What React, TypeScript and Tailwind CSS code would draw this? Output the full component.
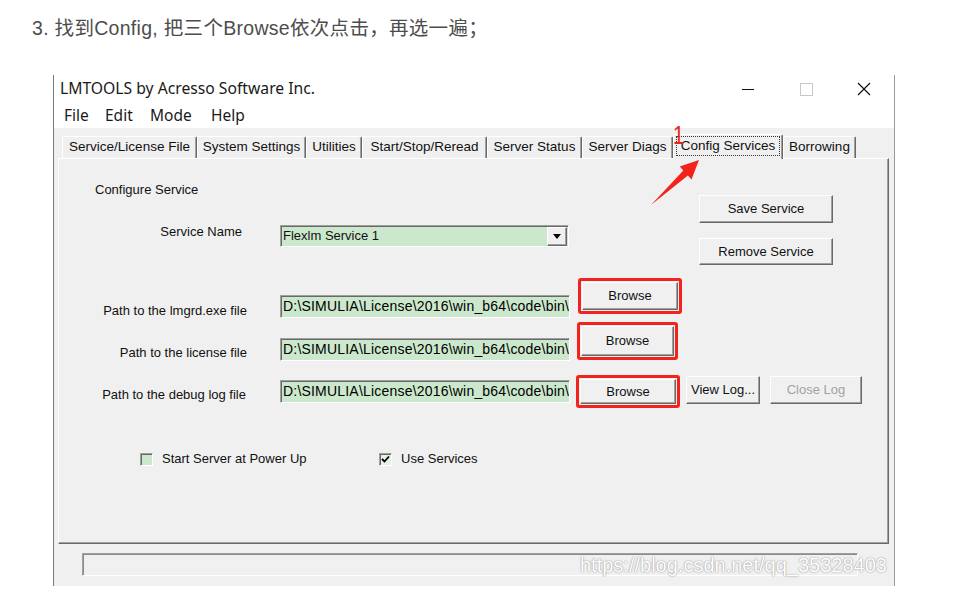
import React from "react";

const tabs = [
  { label: "Service/License File", w: "w-[135px]" },
  { label: "System Settings", w: "w-[109px]" },
  { label: "Utilities", w: "w-[56px]" },
  { label: "Start/Stop/Reread", w: "w-[125px]" },
  { label: "Server Status", w: "w-[95px]" },
  { label: "Server Diags", w: "w-[91px]" },
  { label: "Config Services", w: "w-[110px]", active: true },
  { label: "Borrowing", w: "w-[73px]" },
];

const btn =
  "flex items-center justify-center bg-[#f0f0f0] text-[13px] border border-t-white border-l-white border-r-[#696969] border-b-[#696969] shadow-[inset_-1px_-1px_0_#a0a0a0]";
const field =
  "bg-[#cce8cc] border border-t-[#a0a0a0] border-l-[#a0a0a0] border-r-white border-b-white shadow-[inset_1px_1px_0_#696969]";
const redBox = "border-[3px] border-[#f3231c] rounded-[3px] p-px";

const path = "D:\\SIMULIA\\License\\2016\\win_b64\\code\\bin\\";

function PathField({ mt }: { mt: string }) {
  return (
    <div className={`${field} ${mt} w-[290px] h-[23px] flex items-center overflow-hidden whitespace-nowrap pl-[2px] text-[14px] tracking-[0.2px] text-black`}>
      {path}
    </div>
  );
}

export default function App() {
  return (
    <div className="relative w-[975px] h-[605px] overflow-hidden bg-white font-['Liberation_Sans','Noto_Sans_CJK_SC',sans-serif]">
      <p className="pl-[32px] pt-[15px] text-[19.5px] tracking-[0.3px] leading-[26px] text-[#4d4d4d]">
        3. 找到Config, 把三个Browse依次点击，再选一遍；
      </p>

      {/* LMTOOLS window */}
      <div className="ml-[53px] mt-[34px] w-[842px] border-l border-r border-l-[#7a7a7a] border-r-[#9a9a9a] flex flex-col">
        <div className="h-[28px] flex items-center pl-[6px] font-['Noto_Sans',sans-serif] text-[15.7px] text-[#1a1a1a]">
          <span>LMTOOLS by Acresso Software Inc.</span>
          <div className="ml-auto flex items-center pr-[23px]">
            <svg width="12" height="12" viewBox="0 0 12 12">
              <line x1="0" y1="6.5" x2="12" y2="6.5" stroke="#111" strokeWidth="1" />
            </svg>
            <svg width="13" height="13" viewBox="0 0 13 13" className="ml-[46px]">
              <rect x="0.5" y="0.5" width="12" height="12" fill="none" stroke="#c8c8c8" strokeWidth="1" />
            </svg>
            <svg width="14" height="14" viewBox="0 0 14 14" className="ml-[44px]">
              <path d="M1 1 L13 13 M13 1 L1 13" stroke="#111" strokeWidth="1.2" />
            </svg>
          </div>
        </div>
        <div className="h-[25px] flex items-center pl-[10px] font-['Noto_Sans',sans-serif] text-[15.5px] text-[#1a1a1a]">
          <span className="w-[41px]">File</span>
          <span className="w-[45px]">Edit</span>
          <span className="w-[61px]">Mode</span>
          <span>Help</span>
        </div>

        <div className="bg-[#f0f0f0] h-[458px] flex flex-col text-[13px] text-[#111]">
          {/* tab strip */}
          <div className="h-[30px] flex items-end pl-[8px] text-[13.5px]">
            {tabs.map((t) =>
              t.active ? (
                <div
                  key={t.label}
                  className={`${t.w} h-[25px] -mb-px relative z-10 bg-[#f0f0f0] border-t border-l border-t-white border-l-white border-r border-r-[#696969] shadow-[inset_-1px_0_0_#a0a0a0] rounded-t-[2px] px-[2px] pt-px pb-[3px]`}
                >
                  <div className="h-full border border-dotted border-[#333] flex items-center justify-center">
                    {t.label}
                  </div>
                </div>
              ) : (
                <div
                  key={t.label}
                  className={`${t.w} h-[22px] border-t border-l border-t-white border-l-white border-r border-r-[#696969] shadow-[inset_-1px_0_0_#a0a0a0] rounded-t-[2px] flex items-center justify-center`}
                >
                  {t.label}
                </div>
              )
            )}
          </div>

          {/* tab panel */}
          <div className="ml-[4px] w-[831px] h-[386px] border border-t-white border-l-white border-r-[#696969] border-b-[#696969] shadow-[inset_-1px_-1px_0_#a0a0a0] flex flex-col">
            <div className="flex">
              <div className="w-[640px] flex flex-col">
                <div className="pl-[36px] pt-[23px] leading-[16px]">Configure Service</div>
                <div className="mt-[27px] flex items-center h-[22px]">
                  <div className="w-[183px] text-right leading-[16px] mb-[8px]">Service Name</div>
                  <div className={`${field} ml-[38px] w-[289px] h-[22px] flex items-center pl-[2px]`}>
                    <span>Flexlm Service 1</span>
                    <div className={`${btn} ml-auto mr-px w-[20px] h-[19px]`}>
                      <svg width="8" height="5" viewBox="0 0 8 5">
                        <path d="M0 0 H8 L4 5 Z" fill="#000" />
                      </svg>
                    </div>
                  </div>
                </div>
              </div>
              <div className="flex flex-col pt-[36px]">
                <div className={`${btn} w-[134px] h-[28px]`}>Save Service</div>
                <div className={`${btn} mt-[15px] w-[134px] h-[27px]`}>Remove Service</div>
              </div>
            </div>

            {/* path rows */}
            <div className="mt-[13px] h-[36px] flex items-start">
              <div className="w-[188px] text-right leading-[16px] mt-[25px]">Path to the lmgrd.exe file</div>
              <PathField mt="mt-[17px] ml-[33px]" />
              <div className={`${redBox} ml-[8px]`}>
                <div className={`${btn} w-[96px] h-[28px]`}>Browse</div>
              </div>
            </div>
            <div className="mt-[8px] h-[38px] flex items-start">
              <div className="w-[188px] text-right leading-[16px] mt-[23px]">Path to the license file</div>
              <PathField mt="mt-[16px] ml-[33px]" />
              <div className={`${redBox} ml-[7px]`}>
                <div className={`${btn} w-[93px] h-[30px]`}>Browse</div>
              </div>
            </div>
            <div className="mt-[15px] h-[33px] flex items-start">
              <div className="w-[187px] text-right leading-[16px] mt-[12px]">Path to the debug log file</div>
              <PathField mt="mt-[5px] ml-[34px]" />
              <div className={`${redBox} ml-[6px]`}>
                <div className={`${btn} w-[96px] h-[25px]`}>Browse</div>
              </div>
              <div className={`${btn} ml-[6px] mt-px w-[74px] h-[28px]`}>View Log...</div>
              <div className={`${btn} ml-[10px] mt-px w-[92px] h-[28px] text-[#a3a3a3]`}>Close Log</div>
            </div>

            {/* checkboxes */}
            <div className="mt-[43px] flex items-center pl-[81px] h-[16px]">
              <div className="w-[239px] flex items-center">
                <div className="w-[13px] h-[13px] bg-[#cce8cc] border border-t-[#a0a0a0] border-l-[#a0a0a0] border-r-white border-b-white shadow-[inset_1px_1px_0_#696969]" />
                <span className="ml-[9px]">Start Server at Power Up</span>
              </div>
              <div className="flex items-center">
                <div className="w-[13px] h-[13px] bg-[#e6f2e6] border border-t-[#a0a0a0] border-l-[#a0a0a0] border-r-white border-b-white shadow-[inset_1px_1px_0_#696969] flex items-center justify-center">
                  <svg width="9" height="8" viewBox="0 0 9 8">
                    <path d="M1 4 L3.5 6.5 L8 1.5" stroke="#000" strokeWidth="1.8" fill="none" />
                  </svg>
                </div>
                <span className="ml-[9px]">Use Services</span>
              </div>
            </div>
          </div>

          {/* status bar */}
          <div className="ml-[28px] mt-[9px] w-[776px] h-[23px] border border-t-[#a0a0a0] border-l-[#a0a0a0] border-r-white border-b-white shadow-[inset_1px_1px_0_#8a8a8a]" />
        </div>
      </div>

      {/* annotation: arrow and number */}
      <svg className="absolute left-0 top-0 z-20 pointer-events-none" width="975" height="605" viewBox="0 0 975 605">
        <polygon
          points="651,205 683.3,170.4 679.8,166.5 699,160 691.5,179.5 687.9,175.6"
          fill="#f3231c"
        />
        <text x="673" y="144" fontSize="25" fill="#e8231a" fontFamily="Liberation Sans, sans-serif" transform="translate(673 0) scale(0.8 1) translate(-673 0)">1</text>
      </svg>

      {/* watermark */}
      <span className="absolute left-[580px] top-[552px] z-20 text-[20px] leading-[26px] text-white [text-shadow:0_0_1px_#8a8a8a,0_0_2px_#b0b0b0]">
        https://blog.csdn.net/qq_35328403
      </span>
    </div>
  );
}
